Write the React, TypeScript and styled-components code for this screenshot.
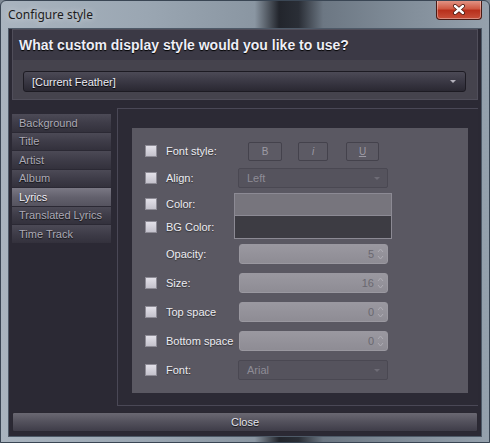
import React from 'react';
import styled, {createGlobalStyle} from 'styled-components';

const GlobalStyle = createGlobalStyle`
  html, body {
    margin: 0;
    padding: 0;
    background: #7d8894;
  }
  body {
    font-family: "Liberation Sans", Arial, sans-serif;
    font-size: 11px;
  }
`;

const Window = styled.div`
  width: 490px;
  height: 443px;
  display: flex;
  flex-direction: column;
  box-sizing: border-box;
  background: linear-gradient(
    90deg,
    #a9b4bf 0%,
    #9aa6b2 30%,
    #8a96a2 52%,
    #22252c 57%,
    #2a2e36 61%,
    #6c7783 66%,
    #7e8a96 80%,
    #95a1ad 100%
  );
  border: 1px solid #3a4654;
  border-radius: 6px 6px 0 0;
  overflow: hidden;
`;

const TitleBar = styled.div`
  height: 27px;
  flex-shrink: 0;
  display: flex;
  align-items: flex-start;
  justify-content: space-between;
  padding-left: 7px;
`;

const TitleText = styled.span`
  font-family: "Noto Sans", "DejaVu Sans", sans-serif;
  font-size: 12px;
  color: #1c1c1c;
  margin-top: 5px;
  text-shadow: 0 0 6px rgba(255, 255, 255, 0.7);
`;

const CloseX = styled.div`
  width: 44px;
  height: 19px;
  margin-right: 7px;
  margin-top: -1px;
  border: 1px solid #4a1a14;
  border-top: none;
  border-radius: 0 0 4px 4px;
  background: linear-gradient(180deg, #e49a8c 0%, #cf5a44 45%, #b8301c 55%, #c8503a 100%);
  box-shadow: inset 0 0 0 1px rgba(255, 255, 255, 0.35);
  display: flex;
  align-items: center;
  justify-content: center;
`;

const Frame = styled.div`
  flex: 1;
  display: flex;
  flex-direction: column;
  margin: 0 7px 5px 7px;
  border: 1px solid #4e5a68;
  background: #2b2934;
  padding: 0 3px 4px 3px;
`;

const Header = styled.div`
  height: 69px;
  flex-shrink: 0;
  border: 1px solid #504e5a;
  background: #45434d;
  display: flex;
  flex-direction: column;
`;

const HeaderTitle = styled.div`
  height: 30px;
  background: #3b3945;
  display: flex;
  align-items: center;
  padding-left: 6px;
  font-size: 14px;
  font-weight: bold;
  color: #eeeef6;
  text-shadow: 0 1px 1px #000;
`;

const HeaderBody = styled.div`
  flex: 1;
  padding: 11px 11px 0 10px;
`;

const StyleSelect = styled.div`
  height: 19px;
  border: 1px solid #1d1b23;
  border-radius: 3px;
  background: linear-gradient(180deg, #4c4a56 0%, #3a3844 50%, #2a2832 100%);
  display: flex;
  align-items: center;
  justify-content: space-between;
  padding: 0 9px 0 8px;
  color: #ececf4;
  font-size: 11px;
  text-shadow: 0 1px 1px #000;
`;

const Arrow = styled.span<{$color: string}>`
  width: 0;
  height: 0;
  border-left: 3px solid transparent;
  border-right: 3px solid transparent;
  border-top: 3px solid ${({$color}) => $color};
`;

const Middle = styled.div`
  display: flex;
  margin-top: 8px;
  gap: 6px;
`;

const List = styled.div`
  width: 99px;
  margin-top: 6px;
  display: flex;
  flex-direction: column;
  gap: 1px;
`;

const ListItem = styled.div<{$active?: boolean}>`
  height: 17.5px;
  display: flex;
  align-items: center;
  padding-left: 7px;
  font-size: 11px;
  color: ${({$active}) => ($active ? '#f2f0f8' : '#acaab6')};
  background: ${({$active}) =>
    $active
      ? 'linear-gradient(180deg, #7a7884 0%, #63616d 50%, #55535f 100%)'
      : 'linear-gradient(180deg, #4c4a56 0%, #3e3c48 50%, #33313c 100%)'};
  text-shadow: 0 1px 1px #111;
`;

const RightPanel = styled.div`
  flex: 1;
  height: 298px;
  box-sizing: border-box;
  border: 1px solid #4a4856;
  border-right: none;
  background: #2c2a35;
  padding: 19px 10px 0 14px;
`;

const Inner = styled.div`
  height: 265px;
  box-sizing: border-box;
  background: #5a5862;
  padding: 13px 0 0 13px;
  display: flex;
  flex-direction: column;
`;

const Row = styled.div<{$top?: number}>`
  height: 20px;
  display: flex;
  align-items: center;
  margin-top: ${({$top}) => $top ?? 0}px;
`;

const CheckSlot = styled.div`
  width: 21px;
  display: flex;
  align-items: center;
`;

const Check = styled.div`
  width: 10px;
  height: 10px;
  border: 1px solid #8e8c96;
  background: linear-gradient(180deg, #e2e0e8 0%, #c4c2cc 100%);
`;

const Label = styled.div`
  width: 72px;
  color: #ececf2;
  font-size: 11px;
  white-space: nowrap;
  text-shadow: 0 1px 1px #333;
`;

const StyleButtons = styled.div`
  display: flex;
  margin-left: 10px;
`;

const StyleButton = styled.div<{$width: number; $gap: number}>`
  width: ${({$width}) => $width}px;
  height: 19px;
  margin-left: ${({$gap}) => $gap}px;
  box-sizing: border-box;
  border: 1px solid #44424c;
  border-radius: 2px;
  background: #5c5a64;
  display: flex;
  align-items: center;
  justify-content: center;
  color: #9c9aa4;
  font-size: 10px;
`;

const Select = styled.div`
  width: 150px;
  height: 20px;
  box-sizing: border-box;
  border: 1px solid #4a4852;
  border-radius: 2px;
  background: #55535d;
  display: flex;
  align-items: center;
  justify-content: space-between;
  padding: 0 7px 0 8px;
  color: #8e8c96;
  font-size: 11px;
`;

const Spin = styled.div`
  width: 149px;
  height: 20px;
  margin-left: 1px;
  box-sizing: border-box;
  border: 1px solid #9a98a0;
  border-radius: 3px;
  background: linear-gradient(180deg, #9a98a0 0%, #8e8c94 100%);
  display: flex;
  align-items: center;
  justify-content: flex-end;
  padding-right: 3px;
  color: #6a6870;
  font-size: 11px;
  gap: 3px;
`;

const SpinArrows = styled.svg`
  display: block;
`;

const ColorGroup = styled.div`
  display: flex;
  margin-top: 5px;
`;

const ColorLabels = styled.div`
  display: flex;
  flex-direction: column;
`;

const ColorLabelRow = styled.div<{$height: number}>`
  height: ${({$height}) => $height}px;
  display: flex;
  align-items: center;
`;

const Swatches = styled.div`
  width: 158px;
  margin-left: -4px;
  box-sizing: border-box;
  border: 1px solid #8c8a94;
  display: flex;
  flex-direction: column;
`;

const Swatch = styled.div<{$fill: string; $height: number}>`
  height: ${({$height}) => $height}px;
  background: ${({$fill}) => $fill};
  & + & {
    border-top: 1px solid #8c8a94;
  }
`;

const CloseButton = styled.div`
  height: 18px;
  margin-top: 6px;
  border: 1px solid #2a2832;
  border-radius: 2px;
  background: linear-gradient(180deg, #6a6872 0%, #55535e 45%, #3e3c48 100%);
  display: flex;
  align-items: center;
  justify-content: center;
  color: #e4e4ec;
  font-size: 11px;
  text-shadow: 0 1px 1px #111;
`;

const tracks = ['Background', 'Title', 'Artist', 'Album', 'Lyrics', 'Translated Lyrics', 'Time Track'];

const Arrows = () => (
  <SpinArrows width="7" height="14" viewBox="0 0 7 14">
    <path d="M1 5 L3.5 2 L6 5" fill="none" stroke="#aeacb4" strokeWidth="1" />
    <path d="M1 9 L3.5 12 L6 9" fill="none" stroke="#aeacb4" strokeWidth="1" />
  </SpinArrows>
);

const SpinRow = ({label, value, top, check = true}: {label: string; value: string; top: number; check?: boolean}) => (
  <Row $top={top}>
    <CheckSlot>{check && <Check />}</CheckSlot>
    <Label>{label}</Label>
    <Spin>
      {value}
      <Arrows />
    </Spin>
  </Row>
);

const App = () => {
  return (
    <>
      <GlobalStyle />
      <Window>
        <TitleBar>
          <TitleText>Configure style</TitleText>
          <CloseX>
            <svg width="14" height="11" viewBox="0 0 14 11">
              <path d="M3 2 L11 9 M11 2 L3 9" stroke="#4a1810" strokeWidth="4" strokeLinecap="round" />
              <path d="M3 2 L11 9 M11 2 L3 9" stroke="#ffffff" strokeWidth="2.4" strokeLinecap="round" />
            </svg>
          </CloseX>
        </TitleBar>
        <Frame>
          <Header>
            <HeaderTitle>What custom display style would you like to use?</HeaderTitle>
            <HeaderBody>
              <StyleSelect>
                [Current Feather]
                <Arrow $color="#b4b2bc" />
              </StyleSelect>
            </HeaderBody>
          </Header>
          <Middle>
            <List>
              {tracks.map((t) => (
                <ListItem key={t} $active={t === 'Lyrics'}>
                  {t}
                </ListItem>
              ))}
            </List>
            <RightPanel>
              <Inner>
                <Row>
                  <CheckSlot>
                    <Check />
                  </CheckSlot>
                  <Label>Font style:</Label>
                  <StyleButtons>
                    <StyleButton $width={34} $gap={0}>B</StyleButton>
                    <StyleButton $width={30} $gap={16}>
                      <i>i</i>
                    </StyleButton>
                    <StyleButton $width={33} $gap={18}>
                      <u>U</u>
                    </StyleButton>
                  </StyleButtons>
                </Row>
                <Row $top={7}>
                  <CheckSlot>
                    <Check />
                  </CheckSlot>
                  <Label>Align:</Label>
                  <Select>
                    Left
                    <Arrow $color="#6e6c76" />
                  </Select>
                </Row>
                <ColorGroup>
                  <ColorLabels>
                    <ColorLabelRow $height={22}>
                      <CheckSlot>
                        <Check />
                      </CheckSlot>
                      <Label>Color:</Label>
                    </ColorLabelRow>
                    <ColorLabelRow $height={24}>
                      <CheckSlot>
                        <Check />
                      </CheckSlot>
                      <Label>BG Color:</Label>
                    </ColorLabelRow>
                  </ColorLabels>
                  <Swatches>
                    <Swatch $fill="#77757d" $height={21} />
                    <Swatch $fill="#3d3c43" $height={22} />
                  </Swatches>
                </ColorGroup>
                <SpinRow label="Opacity:" value="5" top={5} check={false} />
                <SpinRow label="Size:" value="16" top={9} />
                <SpinRow label="Top space" value="0" top={9} />
                <SpinRow label="Bottom space" value="0" top={9} />
                <Row $top={9}>
                  <CheckSlot>
                    <Check />
                  </CheckSlot>
                  <Label>Font:</Label>
                  <Select>
                    Arial
                    <Arrow $color="#6e6c76" />
                  </Select>
                </Row>
              </Inner>
            </RightPanel>
          </Middle>
          <CloseButton>Close</CloseButton>
        </Frame>
      </Window>
    </>
  );
};

export default App;
